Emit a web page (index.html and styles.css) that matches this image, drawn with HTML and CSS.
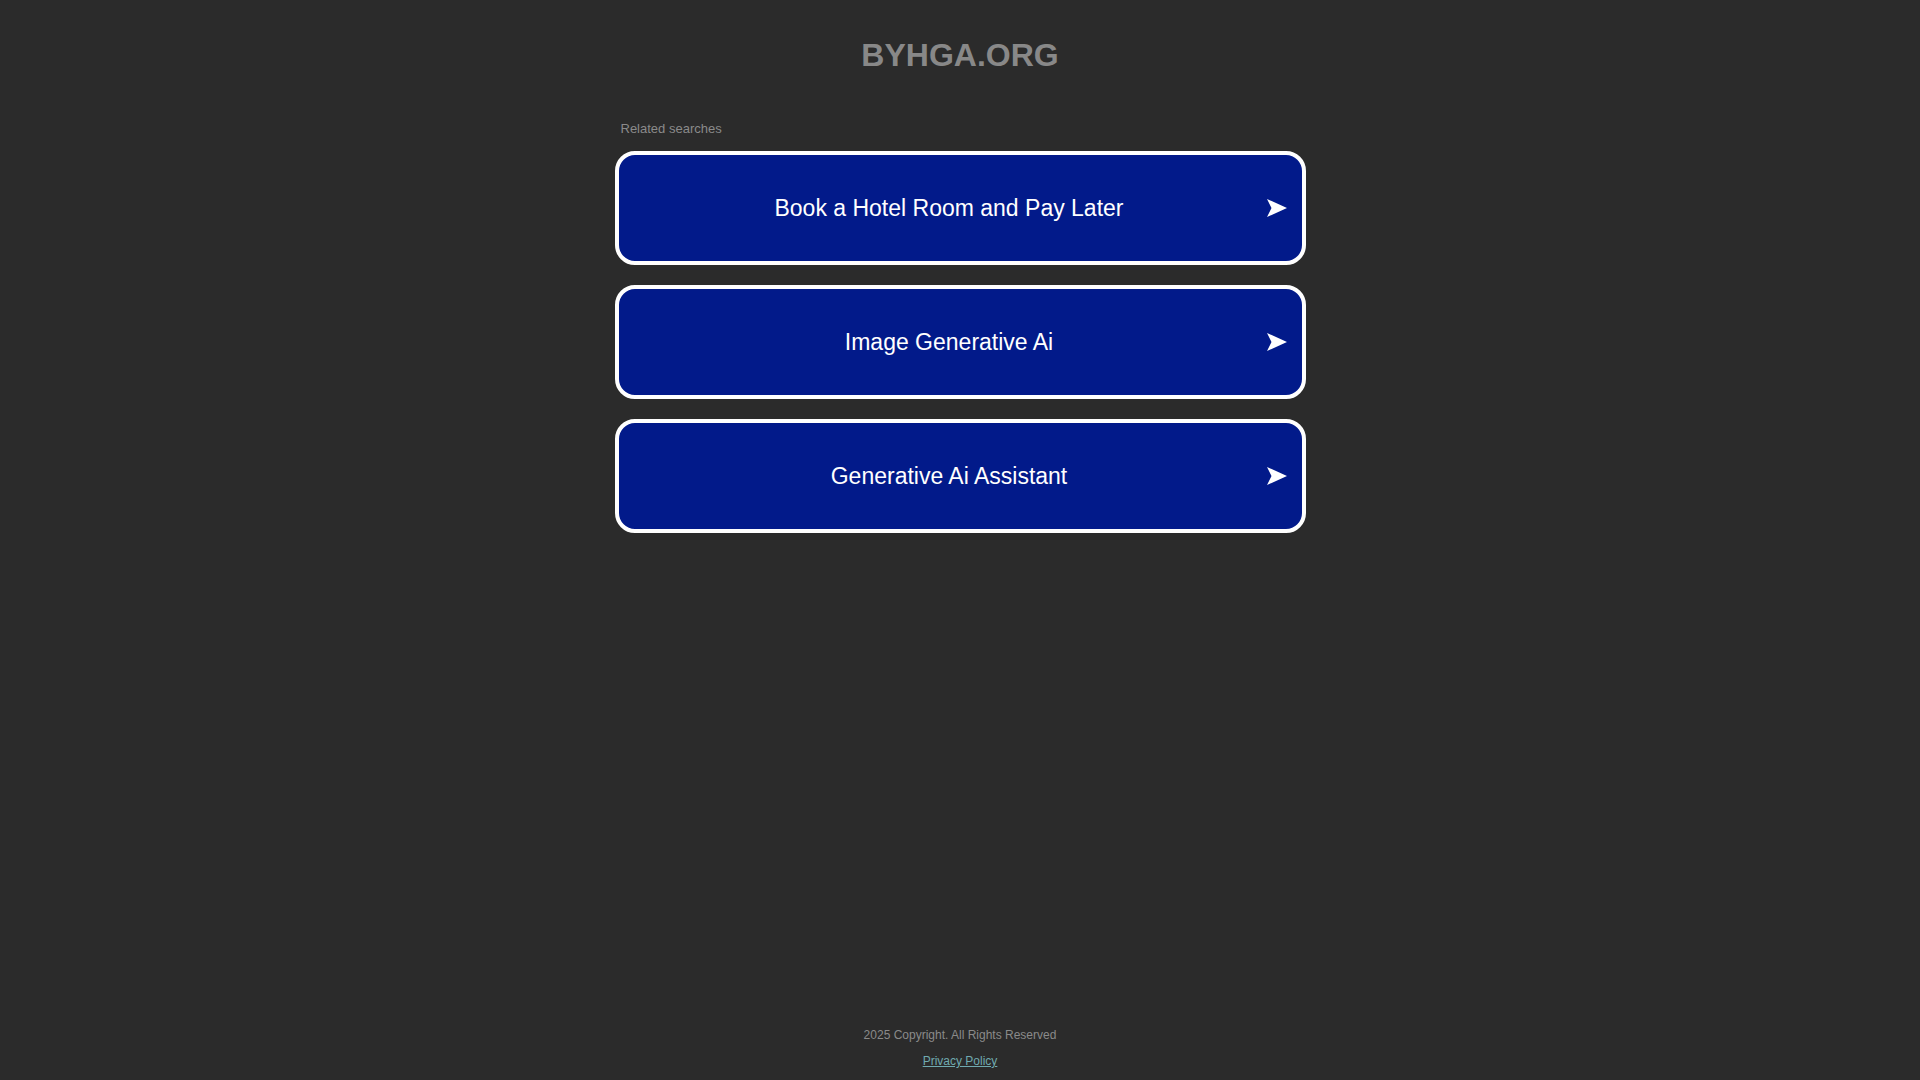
FILE: index.html
```html
<!DOCTYPE html>
<html lang="en">
<head>
<meta charset="utf-8">
<title>byhga.org</title>
<link rel="stylesheet" href="styles.css">
</head>
<body>
<div class="page">
  <h1 class="title">BYHGA.ORG</h1>
  <section class="related">
    <div class="related-label">Related searches</div>
    <div class="links">
      <a class="link-btn" href="#"><span class="link-text">Book a Hotel Room and Pay Later</span><svg class="arrow" viewBox="0 0 20 18" width="20" height="18"><path d="M0 0 L20 9 L0 18 L4.5 9 Z" fill="#fff"/></svg></a>
      <a class="link-btn" href="#"><span class="link-text">Image Generative Ai</span><svg class="arrow" viewBox="0 0 20 18" width="20" height="18"><path d="M0 0 L20 9 L0 18 L4.5 9 Z" fill="#fff"/></svg></a>
      <a class="link-btn" href="#"><span class="link-text">Generative Ai Assistant</span><svg class="arrow" viewBox="0 0 20 18" width="20" height="18"><path d="M0 0 L20 9 L0 18 L4.5 9 Z" fill="#fff"/></svg></a>
    </div>
  </section>
  <footer class="footer">
    <div class="copyright">2025 Copyright. All Rights Reserved</div>
    <a class="privacy" href="#">Privacy Policy</a>
  </footer>
</div>
</body>
</html>
```

FILE: styles.css
```css
html, body {
  margin: 0;
  padding: 0;
}
body {
  background: #2b2b2b;
  font-family: "Liberation Sans", Arial, sans-serif;
}
.page {
  min-height: 100vh;
  display: flex;
  flex-direction: column;
  align-items: center;
}
.title {
  margin: 0;
  padding-top: 37px;
  font-size: 32px;
  line-height: 36px;
  font-weight: bold;
  color: #888888;
}
.related {
  width: 691px;
  margin-top: 48px;
}
.related-label {
  padding-left: 6px;
  font-size: 13px;
  line-height: 15px;
  color: #8a8a8a;
}
.links {
  margin-top: 15px;
  display: flex;
  flex-direction: column;
  gap: 20px;
}
.link-btn {
  box-sizing: border-box;
  height: 114px;
  display: flex;
  align-items: center;
  background: #021a8a;
  border: 4px solid #ffffff;
  border-radius: 20px;
  text-decoration: none;
  color: #ffffff;
  padding-left: 13px;
  padding-right: 15px;
}
.link-text {
  flex: 1;
  text-align: center;
  font-size: 23px;
}
.arrow {
  display: block;
  flex: none;
}
.footer {
  margin-top: auto;
  display: flex;
  flex-direction: column;
  align-items: center;
  gap: 12px;
  padding-bottom: 12px;
}
.copyright {
  font-size: 12px;
  line-height: 14px;
  color: #8a8a8a;
}
.privacy {
  font-size: 12px;
  line-height: 14px;
  color: #70aab0;
  text-decoration: underline;
}
```
